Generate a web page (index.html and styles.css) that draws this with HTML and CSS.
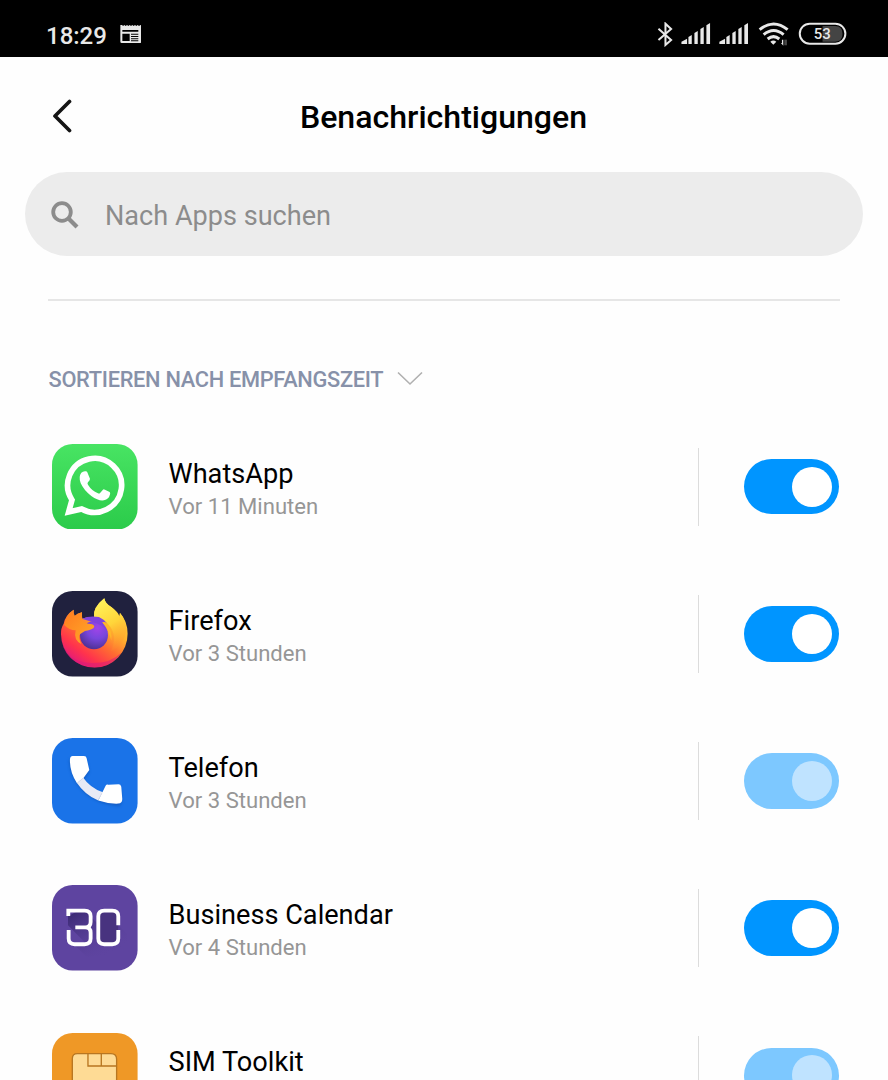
FILE: index.html
```html
<!DOCTYPE html>
<html lang="de">
<head>
<meta charset="utf-8">
<title>Benachrichtigungen</title>
<link rel="stylesheet" href="styles.css">
</head>
<body>
<div class="statusbar">
  <span class="clock">18:29</span>
  <svg class="news" viewBox="272 42 62 58" width="20.7" height="19.3"><path fill="#e8e8e8" fill-rule="evenodd" d="M273 45h5l3 3 4-3 4 3 4-3 4 3 4-3 4 3 4-3 4 3 4-3 4 3 4-3 4 3 5-3h3v50q0 4-4 4H277q-4 0-4-4zM279 60v5h48v-5zM279 71v22h22V71zM305 71v3h22v-3zM305 78v3h22v-3zM305 85v3h22v-3zM305 91v3h22v-3z"/></svg>
  <svg class="signals" viewBox="36 36 570 76" width="190" height="25.3">
    <g fill="none" stroke="#e8e8e8" stroke-width="6"><path d="M40 56L78 90 61 105V41L78 57 40 90"/></g>
    <g id="sig" fill="#e8e8e8"><path d="M109 102v-7l17-9v16z"/><path d="M130 102V81l10-6v27zM148 102V69l10-6v39zM166 102V57l10-6v51zM184 102V46l11-7v63z"/></g>
    <use href="#sig" x="114"/>
    <g fill="none" stroke="#e8e8e8" stroke-width="9"><path d="M344 59Q386 25 428 59"/><path d="M356 74Q386 49 416 74"/><path d="M368 87Q386 73 403 87"/></g>
    <path fill="#e8e8e8" d="M376 95q9-7 18 0l-9 9zM411 89h4v18l-7-8h3z"/><path fill="#484848" d="M418 89h8v17h-8z"/>
    <rect x="464.5" y="41" width="137" height="60" rx="30" fill="none" stroke="#e8e8e8" stroke-width="6"/>
    <path d="M533 48h38q22 0 22 23t-22 24h-38z" fill="#444"/>
    <text class="charge" x="532" y="87" text-anchor="middle">53</text>
  </svg>
</div>
<header class="titlebar">
  <svg class="back" viewBox="0 0 20 34" width="20" height="34"><path d="M17.5 2.5L3 17l14.500 14.500" fill="none" stroke="#151515" stroke-width="3.700" stroke-linecap="round" stroke-linejoin="round"/></svg>
  <h1>Benachrichtigungen</h1>
</header>
<div class="search">
  <svg viewBox="0 0 28 28" width="28" height="28"><g fill="none" stroke="#8c8c8c"><circle cx="11" cy="11" r="8.800" stroke-width="3.800"/><path d="M17.500 17.500L26 26" stroke-width="4.200"/></g></svg>
  <span class="hint">Nach Apps suchen</span>
</div>
<div class="rule"></div>
<div class="sort"><span class="sort-label">SORTIEREN NACH EMPFANGSZEIT</span>
  <svg viewBox="0 0 26 15" width="26" height="15"><path d="M1 1.500L13 13 25 1.500" fill="none" stroke="#b0b0b0" stroke-width="1.600"/></svg>
</div>
<main class="apps">
  <section class="app">
    <svg class="icon" viewBox="36 26 257 257">
      <defs><linearGradient id="wa" x2="0" y2="1"><stop stop-color="#48e463"/><stop offset="1" stop-color="#2bcb4a"/></linearGradient></defs>
      <rect x="36" y="26" width="257" height="257" rx="62" fill="url(#wa)"/>
      <path d="M86 230L96 194A81 81 0 1 1 125 221Z" fill="none" stroke="#fff" stroke-width="17" stroke-linejoin="miter"/>
      <path fill="#fff" d="M124 112Q130 106 139 108Q142 109 145 118L150 130Q151 134 144 141Q141 144 144 148Q155 166 174 174Q178 176 181 172L189 163Q191 161 195 163L209 170Q212 172 210 178Q207 192 192 195Q176 198 154 182Q131 164 122 143Q115 124 124 112Z"/>
    </svg>
    <div class="info"><div class="name">WhatsApp</div><div class="time">Vor 11 Minuten</div></div>
    <div class="switch-cell"><span class="switch"></span></div>
  </section>
  <section class="app">
    <svg class="icon" viewBox="36 26 257 257">
      <defs>
        <linearGradient id="ff" x1=".85" y1=".1" x2=".25" y2=".95"><stop stop-color="#ffdf43"/><stop offset=".32" stop-color="#ffb32e"/><stop offset=".58" stop-color="#ff6b32"/><stop offset=".82" stop-color="#ff334c"/><stop offset="1" stop-color="#e51b78"/></linearGradient>
        <linearGradient id="tail" x1=".3" x2=".65" y2="1"><stop stop-color="#fff35a"/><stop offset=".5" stop-color="#ffd53a"/><stop offset="1" stop-color="#ff8b29" stop-opacity=".1"/></linearGradient>
        <radialGradient id="globe" cx=".62" cy=".25" r=".75"><stop stop-color="#a044e8"/><stop offset=".5" stop-color="#7846dc"/><stop offset="1" stop-color="#503298"/></radialGradient>
        <linearGradient id="fox" x2="1" y2="1"><stop stop-color="#ff7a20"/><stop offset="1" stop-color="#ffad28"/></linearGradient>
      </defs>
      <rect x="36" y="26" width="257" height="257" rx="62" fill="#20213e"/>
      <path fill="url(#ff)" d="M71 124Q76 98 101 82Q100 94 104 101Q111 94 126 90V109Q145 102 162 105Q158 76 193 48Q196 65 215 75Q233 88 238 101L240 91Q263 117 263 154A100 101 0 0 1 63 156Q62 138 71 124Z"/>
      <path fill="url(#tail)" d="M162 105Q158 76 193 48Q196 65 215 75Q238 94 240 112L240 92Q256 111 260 140Q253 189 213 207Q235 160 206 127Q191 110 162 105Z"/>
      <circle cx="162" cy="159" r="42" fill="url(#globe)"/>
      <path d="M126 109Q149 99 177 104Q191 110 202 124Q193 119 187 120Q202 130 204 152Q196 132 173 124Z" fill="#8042dd"/>
      <path fill="url(#fox)" d="M72 127Q77 99 101 82Q99 94 104 101Q112 93 126 90Q125 103 129 116L144 124Q163 124 163 133Q160 142 135 146L121 155Q113 161 124 185Q100 174 107 144Q88 144 72 127Z"/>
      <path d="M66 181Q88 243 155 242Q213 243 243 212Q217 254 164 255Q84 251 66 181Z" fill="#d91c7a" opacity=".55"/>
      <path d="M187 120Q196 116 203 126Q218 148 214 175Q207 145 187 120Z" fill="#ffb52a"/>
    </svg>
    <div class="info"><div class="name">Firefox</div><div class="time">Vor 3 Stunden</div></div>
    <div class="switch-cell"><span class="switch"></span></div>
  </section>
  <section class="app">
    <svg class="icon" viewBox="36 25 257 257">
      <defs><filter id="soft" x="-20%" y="-20%" width="140%" height="150%"><feGaussianBlur stdDeviation="4"/></filter></defs>
      <rect x="36" y="25" width="257" height="257" rx="62" fill="#1a73e8"/>
      <path d="M89 84Q90 132 123 170Q163 217 241 223L246 208Q245 181 241 166L202 165 189 188Q152 175 131 146L148 121 139 80Z" transform="translate(-1 6)" fill="#0b429b" opacity=".5" filter="url(#soft)"/>
      <path fill="#e8eaf5" d="M111 160L130 144Q150 174 189 188L175 213Q134 195 111 160Z"/>
      <path fill="#fff" d="M98 79H132Q139 79 140 86L148 121 130 146 111 161Q88 125 90 88Q91 79 98 79ZM175 213L197 168Q199 164 205 165L236 164Q242 164 244 171L247 208Q247 221 235 222Q203 223 175 213Z"/>
      <path d="M113 159L130 145M175 211L186 190" stroke="#ccd0e2" stroke-width="3" opacity=".65"/>
    </svg>
    <div class="info"><div class="name">Telefon</div><div class="time">Vor 3 Stunden</div></div>
    <div class="switch-cell"><span class="switch locked"></span></div>
  </section>
  <section class="app">
    <svg class="icon" viewBox="36 25 257 257">
      <defs><linearGradient id="cast" x2=".75" y2="1"><stop stop-color="#38276f"/><stop offset=".95" stop-color="#5e44a0" stop-opacity="0"/></linearGradient></defs>
      <rect x="36" y="25" width="257" height="257" rx="62" fill="#5e44a0"/>
      <path fill="url(#cast)" d="M84 119L108 106H140L150 120V138L141 150 150 166V188L140 203 84 146ZM152 120L178 146V202H235V146L262 173V225L245 240H140L104 206H152Z"/>
      <path fill="#48337f" d="M175 105H235V148L232 200H178Z"/>
      <path fill="none" stroke="#fff" stroke-width="11.500" d="M85 118V102H134Q152 102 152 119V136Q152 152 136 152Q152 152 152 168V186Q152 203 134 203H104Q86 203 86 186V160M106 152H138M235 146V119Q235 102 217 102H193Q175 102 175 119V186Q175 203 193 203H217Q235 203 235 186V160"/>
    </svg>
    <div class="info"><div class="name">Business Calendar</div><div class="time">Vor 4 Stunden</div></div>
    <div class="switch-cell"><span class="switch"></span></div>
  </section>
  <section class="app">
    <svg class="icon" viewBox="36 36 257 257">
      <rect x="36" y="36" width="257" height="257" rx="62" fill="#ef9826"/>
      <path d="M97 245V113Q97 98 112 98H213Q230 98 230 115V245Z" fill="#fedb95" stroke="#b87620" stroke-width="4"/>
      <path d="M144 98V135H230M184 98V135" fill="none" stroke="#b87620" stroke-width="4"/>
    </svg>
    <div class="info"><div class="name">SIM Toolkit</div><div class="time"></div></div>
    <div class="switch-cell"><span class="switch locked"></span></div>
  </section>
</main>
</body>
</html>
```
FILE: styles.css
```css
* { box-sizing: border-box; }
body {
  margin: 0;
  height: 1080px;
  display: flex;
  flex-direction: column;
  background: #fefefe;
  color: #000;
  font-family: Roboto, "Liberation Sans", sans-serif;
  overflow: hidden;
}
svg { display: block; flex: none; }
.statusbar {
  height: 57px;
  flex: none;
  padding: 10px 41px 0 46px;
  display: flex;
  align-items: center;
  background: #000;
  color: #e8e8e8;
}
.clock { font-size: 24px; font-weight: 500; line-height: 30px; margin-top: 4px; }
.news { margin: 1px 0 0 13px; }
.signals { margin: 2px 0 0 auto; }
.charge { font: 500 45px Roboto, sans-serif; fill: #e8e8e8; }
.titlebar {
  height: 115px;
  flex: none;
  padding: 3px 52px 0;
  display: grid;
  grid-template-columns: 20px 1fr 20px;
  align-items: center;
}
.back { margin-left: -.500px; }
h1 {
  margin: 0 0 0 -1px;
  text-align: center;
  font-size: 32.100px;
  font-weight: 500;
  line-height: 40px;
  padding-top: 2px;
  white-space: nowrap;
}
.search {
  height: 83.500px;
  flex: none;
  margin: 0 25px;
  padding: 2px 26px 0;
  display: flex;
  align-items: center;
  gap: 26px;
  border-radius: 42px;
  background: #ececec;
}
.search svg { margin: 1px .500px 0 -.500px; }
.hint { margin-top: 2px; font-size: 27.100px; color: #8c8c8c; white-space: nowrap; }
.rule { height: 2px; flex: none; margin: 43.500px 48px 0; background: #e6e6e6; }
.sort {
  height: 112px;
  flex: none;
  padding: 44px 48.500px 0;
  display: flex;
  align-items: flex-start;
  gap: 14px;
  color: #8791a9;
}
.sort-label {
  font-size: 21.800px;
  line-height: 70px;
  font-weight: 500;
  letter-spacing: -.300px;
  white-space: nowrap;
}
.sort svg { margin-top: 26px; }
.apps {
  flex: 1;
  min-height: 0;
  display: flex;
  flex-direction: column;
  overflow: hidden;
}
.app {
  height: 147.200px;
  flex: none;
  padding: 0 49px 0 52px;
  display: flex;
  align-items: center;
}
.icon { width: 85.600px; height: 85.600px; }
.info { margin: 5px 0 0 31px; flex: 1; white-space: nowrap; }
.name { font-size: 27.150px; line-height: 34px; }
.time { height: 31px; font-size: 22.100px; line-height: 31px; color: #969696; }
.switch-cell {
  height: 78px;
  padding-left: 45px;
  display: flex;
  align-items: center;
  border-left: 1px solid #dcdcdc;
}
.switch {
  width: 95px;
  height: 55.500px;
  padding-right: 7.500px;
  display: flex;
  align-items: center;
  justify-content: flex-end;
  border-radius: 28px;
  background: #0095ff;
}
.switch::after { content: ""; width: 40px; height: 40px; border-radius: 50%; background: #fff; }
.switch.locked { background: #7dc8ff; }
.switch.locked::after { background: #bfe3ff; }
```
